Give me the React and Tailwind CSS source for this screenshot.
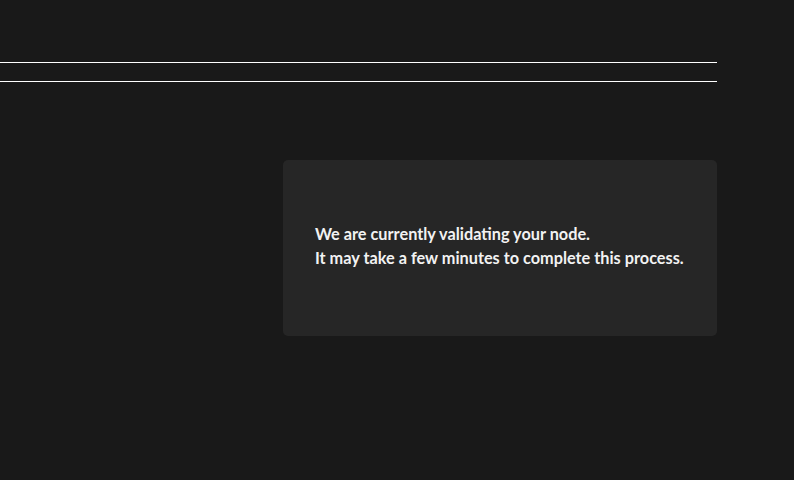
import React from 'react'

export default function App() {
  return (
    <div className="min-h-[480px] w-full bg-[#191919] font-['Lato',sans-serif]">
      <div className="w-[717px] pt-[62px]">
        {/* header rules */}
        <div className="h-[19px] border-t border-white" />
        <div className="border-t border-white" />

        <div className="mt-[78px] flex justify-end">
          <div className="flex h-[176px] w-[434px] flex-col justify-center rounded-[5px] bg-[#262626] pl-[32px] pr-[20px] pb-[4px]">
            <p className="text-[16.3px] font-bold leading-[24px] text-[#f2f2f2]">
              We are currently validating your node.
            </p>
            <p className="text-[16.3px] font-bold leading-[24px] text-[#f2f2f2]">
              It may take a few minutes to complete this process.
            </p>
          </div>
        </div>
      </div>
    </div>
  )
}
